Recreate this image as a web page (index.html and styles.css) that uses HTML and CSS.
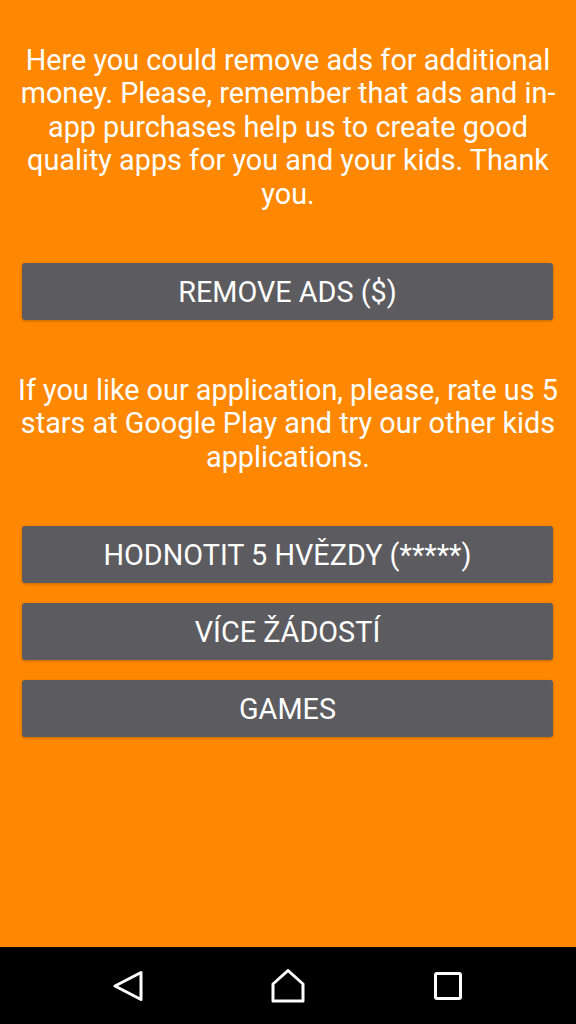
FILE: index.html
```html
<!DOCTYPE html>
<html>
<head>
<meta charset="utf-8">
<link rel="stylesheet" href="styles.css">
</head>
<body>
<div class="screen">
  <main class="content">
    <p class="msg msg-first">Here you could remove ads for additional money. Please, remember that ads and in-app purchases help us to create good quality apps for you and your kids. Thank you.</p>
    <button class="btn">REMOVE ADS ($)</button>
    <p class="msg msg-second">If you like our application, please, rate us 5 stars at Google Play and try our other kids applications.</p>
    <div class="btn-group">
      <button class="btn">HODNOTIT 5 HVĚZDY (*****)</button>
      <button class="btn">VÍCE ŽÁDOSTÍ</button>
      <button class="btn">GAMES</button>
    </div>
  </main>
  <nav class="navbar">
    <div class="nav-slot"><svg width="30" height="32" viewBox="0 0 30 32"><path d="M2 16 L28 2.5 L28 29.5 Z" fill="none" stroke="#fff" stroke-width="3" stroke-linejoin="round"/></svg></div>
    <div class="nav-slot"><svg width="34" height="34" viewBox="0 0 34 34"><path d="M2 15 L17 1.5 L32 15 L32 32 L2 32 Z" fill="none" stroke="#fff" stroke-width="3" stroke-linejoin="round"/></svg></div>
    <div class="nav-slot"><svg width="28" height="28" viewBox="0 0 28 28"><rect x="1.5" y="1.5" width="25" height="25" rx="1.5" fill="none" stroke="#fff" stroke-width="3"/></svg></div>
  </nav>
</div>
</body>
</html>
```

FILE: styles.css
```css
* { box-sizing: border-box; }
html, body {
  margin: 0;
  padding: 0;
}
body {
  font-family: Roboto, "Liberation Sans", sans-serif;
  background: #ff8800;
}
.screen {
  width: 576px;
  height: 1024px;
  display: flex;
  flex-direction: column;
}
.content {
  flex: 1;
  background: #ff8800;
  display: flex;
  flex-direction: column;
  padding: 44px 22px 0 22px;
}
.msg {
  margin: 0 -6px;
  color: #fff;
  font-size: 28.8px;
  line-height: 33.4px;
  text-align: center;
}
.msg-first { margin-bottom: 52px; }
.msg-second { margin-top: 54px; margin-bottom: 52px; }
.btn {
  display: block;
  width: 531px;
  height: 57px;
  padding: 0;
  border: none;
  border-radius: 3px;
  background: #5c5b5f;
  color: #fff;
  font-family: Roboto, "Liberation Sans", sans-serif;
  font-weight: 400;
  font-size: 28.8px;
  box-shadow: 0 1px 3px rgba(0,0,0,0.25);
}
.btn-group {
  display: flex;
  flex-direction: column;
  gap: 20px;
}
.navbar {
  height: 77px;
  background: #000;
  display: grid;
  grid-template-columns: repeat(3, 160px);
  justify-content: center;
  align-items: center;
}
.nav-slot {
  display: flex;
  justify-content: center;
  align-items: center;
}
.nav-slot svg { display: block; }
```
